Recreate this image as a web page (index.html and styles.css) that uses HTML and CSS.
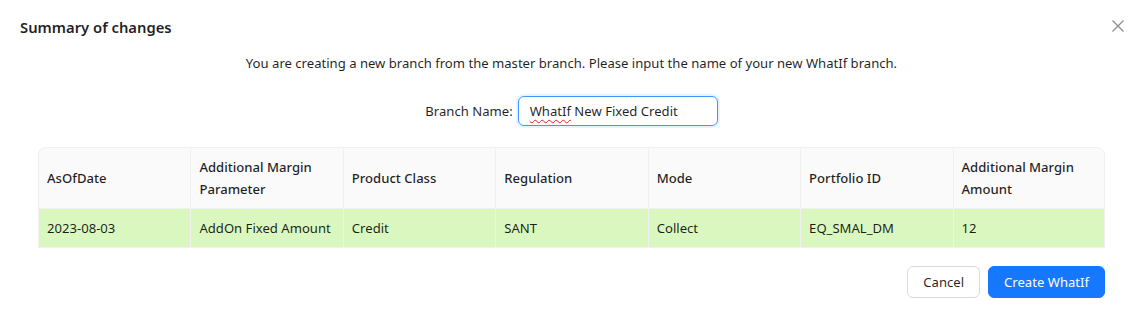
FILE: index.html
```html
<html lang="en">
<head>
    <meta charset="UTF-8">
    <title>Summary of changes</title>
    <link rel="stylesheet" href="styles.css">
</head>
<body>
    <div class="modal">
        <div class="modal-header">
            <h2 class="modal-title">Summary of changes</h2>
            <span class="modal-close">
                <svg width="12" height="12" viewBox="0 0 12 12"><path d="M0.5 0.5 L11.5 11.5 M11.5 0.5 L0.5 11.5" stroke="currentColor" stroke-width="1.3" fill="none"/></svg>
            </span>
        </div>

        <p class="intro">You are creating a new branch from the master branch. Please input the name of your new WhatIf branch.</p>

        <div class="branch-row">
            <label class="branch-label">Branch Name:</label>
            <div class="branch-input"><span class="misspelled">WhatIf</span> New Fixed Credit</div>
        </div>

        <table class="changes">
            <thead>
                <tr>
                    <th>AsOfDate</th>
                    <th>Additional Margin Parameter</th>
                    <th>Product Class</th>
                    <th>Regulation</th>
                    <th>Mode</th>
                    <th>Portfolio ID</th>
                    <th>Additional Margin Amount</th>
                </tr>
            </thead>
            <tbody>
                <tr class="added">
                    <td>2023-08-03</td>
                    <td>AddOn Fixed Amount</td>
                    <td>Credit</td>
                    <td>SANT</td>
                    <td>Collect</td>
                    <td>EQ_SMAL_DM</td>
                    <td>12</td>
                </tr>
            </tbody>
        </table>

        <div class="modal-footer">
            <button class="btn">Cancel</button>
            <button class="btn btn-primary">Create WhatIf</button>
        </div>
    </div>
</body>
</html>
```

FILE: styles.css
```css
body {
    margin: 0;
    background-color: #ffffff;
    font-family: "Noto Sans", "Open Sans", sans-serif;
    font-size: 13.1px;
    color: rgba(0, 0, 0, 0.88);
}

.modal {
    padding: 15px 37px 16px 38px;
}

.modal-header {
    display: flex;
    justify-content: space-between;
    align-items: center;
    margin-left: -18px;
    margin-right: -19px;
}

.modal-title {
    margin: 0;
    font-size: 14.8px;
    font-weight: 600;
    line-height: 24px;
}

.modal-close {
    color: rgba(0, 0, 0, 0.45);
    display: flex;
    margin-top: -3px;
}

.intro {
    margin: 13px 0 0;
    text-align: center;
    line-height: 22px;
}

.branch-row {
    display: flex;
    justify-content: center;
    align-items: center;
    gap: 5px;
    margin-top: 22px;
}

.branch-label {
    line-height: 22px;
}

.branch-input {
    width: 176px;
    height: 28px;
    line-height: 28px;
    padding: 0 11px;
    border: 1px solid #4096ff;
    border-radius: 6px;
    box-shadow: 0 0 0 2px rgba(5, 145, 255, 0.1);
}

.misspelled {
    text-decoration: underline wavy #e02020;
    text-decoration-thickness: 1px;
    text-underline-offset: 3px;
}

.changes {
    width: 100%;
    margin-top: 21px;
    border-collapse: separate;
    border-spacing: 0;
    table-layout: fixed;
    font-size: inherit;
    color: inherit;
}

.changes th,
.changes td {
    padding: 8px;
    text-align: left;
    line-height: 22px;
    border-bottom: 1px solid #f0f0f0;
    border-left: 1px solid #f0f0f0;
    vertical-align: middle;
}

.changes th:last-child,
.changes td:last-child {
    border-right: 1px solid #f0f0f0;
}

.changes th {
    background-color: #fafafa;
    font-weight: 500;
    border-top: 1px solid #f0f0f0;
}

.changes th:first-child {
    border-top-left-radius: 8px;
}

.changes th:last-child {
    border-top-right-radius: 8px;
}

.changes tr.added td {
    background-color: #d9f7be;
}

.modal-footer {
    display: flex;
    justify-content: flex-end;
    gap: 8px;
    margin-top: 18px;
}

.btn {
    font-family: inherit;
    font-size: 13.1px;
    height: 32px;
    padding: 0 15px;
    border: 1px solid #d9d9d9;
    border-radius: 6px;
    background-color: #ffffff;
    color: rgba(0, 0, 0, 0.88);
}

.btn-primary {
    background-color: #1677ff;
    border-color: #1677ff;
    color: #ffffff;
}
```
